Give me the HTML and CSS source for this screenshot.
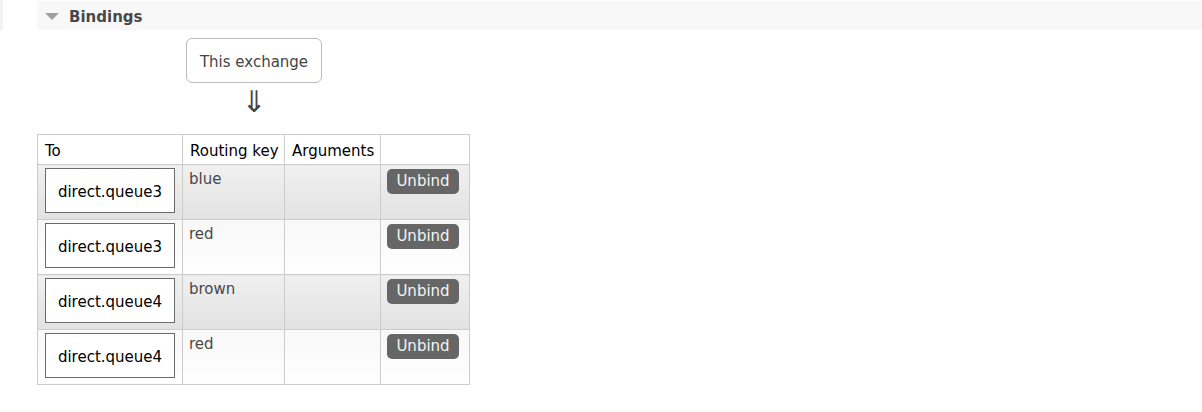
FILE: index.html
```html
<!DOCTYPE html>
<html>
<head>
<meta charset="utf-8">
<link rel="stylesheet" href="styles.css">
</head>
<body>
<div class="page">
  <div class="sliver"></div>
  <div class="main">
    <div class="section-head">
      <span class="tri"></span>
      <span class="title">Bindings</span>
    </div>
    <div class="source">
      <div class="exchange">This exchange</div>
      <div class="arrow">&#8659;</div>
    </div>
    <table class="list">
      <thead>
        <tr>
          <th class="c1">To</th>
          <th class="c2">Routing key</th>
          <th class="c3">Arguments</th>
          <th class="c4"></th>
        </tr>
      </thead>
      <tbody>
        <tr class="odd">
          <td class="qcell"><div class="queue">direct.queue3</div></td>
          <td class="key">blue</td>
          <td></td>
          <td class="act"><span class="btn">Unbind</span></td>
        </tr>
        <tr class="even">
          <td class="qcell"><div class="queue">direct.queue3</div></td>
          <td class="key">red</td>
          <td></td>
          <td class="act"><span class="btn">Unbind</span></td>
        </tr>
        <tr class="odd">
          <td class="qcell"><div class="queue">direct.queue4</div></td>
          <td class="key">brown</td>
          <td></td>
          <td class="act"><span class="btn">Unbind</span></td>
        </tr>
        <tr class="even">
          <td class="qcell"><div class="queue">direct.queue4</div></td>
          <td class="key">red</td>
          <td></td>
          <td class="act"><span class="btn">Unbind</span></td>
        </tr>
      </tbody>
    </table>
  </div>
</div>
</body>
</html>
```
FILE: styles.css
```css
html, body {
  margin: 0;
  padding: 0;
  background: #fff;
}
body {
  font-family: "DejaVu Sans", Verdana, sans-serif;
  font-size: 15px;
  line-height: 18px;
  color: #484848;
}
.page {
  display: flex;
  align-items: flex-start;
}
.sliver {
  width: 3px;
  height: 30px;
  background: #f2f2f2;
  flex: none;
}
.main {
  margin-left: 34px;
  flex: 1;
}
.section-head {
  margin-top: 1px;
  height: 29px;
  background: #f8f8f8;
  display: flex;
  align-items: center;
}
.tri {
  width: 0;
  height: 0;
  margin-left: 8px;
  margin-top: 2px;
  border-left: 7px solid transparent;
  border-right: 7px solid transparent;
  border-top: 7px solid #a0a0a0;
}
.title {
  margin-left: 10px;
  font-weight: bold;
  color: #484848;
  margin-top: 3px;
}
.source {
  margin-left: 149px;
  margin-top: 8px;
  width: 136px;
  display: flex;
  flex-direction: column;
  align-items: center;
}
.exchange {
  box-sizing: border-box;
  width: 136px;
  height: 45px;
  padding-top: 2px;
  border: 1px solid #bbb;
  border-radius: 6px;
  display: flex;
  align-items: center;
  justify-content: center;
  color: #444;
}
.arrow {
  font-size: 30px;
  line-height: 26px;
  height: 26px;
  margin-top: 6px;
  color: #444;
}
table.list {
  margin-top: 19px;
  border-collapse: collapse;
  table-layout: fixed;
  width: 433px;
}
table.list th, table.list td {
  border: 1px solid #ccc;
  text-align: left;
  vertical-align: top;
}
table.list th {
  font-weight: normal;
  color: #000;
  background: #fff;
  white-space: nowrap;
  overflow: visible;
  padding: 7px 4px 4px 7px;
}
th.c1 { width: 133px; }
th.c2 { width: 90px; }
th.c3 { width: 84px; }
th.c4 { width: 77px; }
tr.odd td {
  background: linear-gradient(to bottom, #f0f0f0 0%, #e2e2e2 100%);
}
tr.even td {
  background: linear-gradient(to bottom, #f8f8f8 0%, #fefefe 100%);
}
td.qcell {
  padding: 3px 6px 6px 7px;
}
.queue {
  box-sizing: border-box;
  width: 130px;
  height: 45px;
  padding-top: 2px;
  border: 1px solid #6a6a6a;
  background: #fff;
  color: #000;
  display: flex;
  align-items: center;
  justify-content: center;
}
td.key {
  padding: 5px 6px 0 6px;
  color: #484848;
}
td.act {
  padding: 4px 6px 0 6px;
}
.btn {
  display: inline-block;
  box-sizing: border-box;
  width: 72px;
  height: 25px;
  line-height: 25px;
  text-align: center;
  background: #666;
  color: #f4f4f4;
  border-radius: 5px;
}
```
